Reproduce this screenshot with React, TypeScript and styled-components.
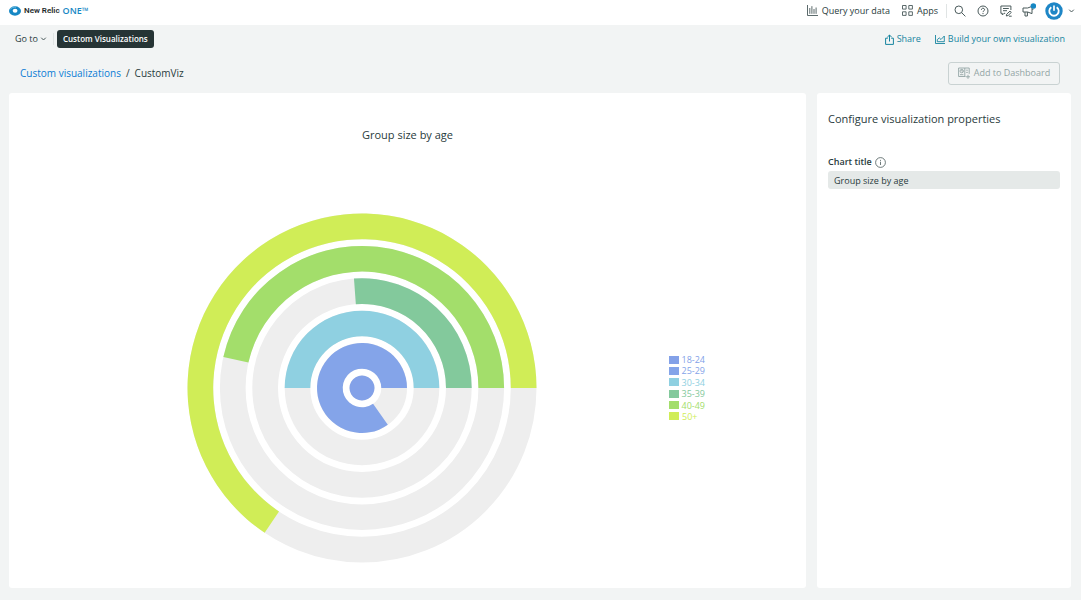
import React from 'react';
import styled, { createGlobalStyle } from 'styled-components';

const color = {
  canvas: '#f2f4f4',
  ink: '#293b3c',
  icon: '#4a5a5b',
  link: '#0b7cd4',
  teal: '#16849f',
  dark: '#263435',
  muted: '#93a5a5',
  brand: '#1687c4',
};

const GlobalStyle = createGlobalStyle`
  *, *::before, *::after { box-sizing: border-box; }
  body {
    margin: 0;
    background: ${color.canvas};
    color: ${color.ink};
    font-family: 'Open Sans', 'Noto Sans', sans-serif;
    font-size: 9px;
    line-height: 12px;
  }
  button, input { font: inherit; color: inherit; }
  button { border: 0; background: none; padding: 0; cursor: pointer; }
  a { text-decoration: none; color: inherit; }
  svg { display: block; flex: none; }
`;

const Page = styled.div`
  min-height: 100vh;
  display: flex;
  flex-direction: column;
`;

const TopBar = styled.header`
  display: flex;
  align-items: center;
  justify-content: space-between;
  height: 25px;
  padding: 0 6px 4px 9px;
  background: #fff;
`;

const Brand = styled.a`
  display: flex;
  align-items: center;
  gap: 3px;
  font-weight: 600;
  color: #1d2b2c;
`;

const BrandName = styled.span`
  font-family: Roboto, 'Open Sans', sans-serif;
  font-size: 8px;
`;

const BrandOne = styled.span`
  color: ${color.brand};
`;

const TopNav = styled.nav`
  display: flex;
  align-items: center;
`;

const NavGroup = styled.div`
  display: flex;
  align-items: center;
  gap: 12px;
  margin-right: 8px;
`;

const NavButton = styled.button`
  display: flex;
  align-items: center;
  gap: 4px;
`;

const Divider = styled.span<{ $height: number }>`
  width: 1px;
  height: ${(p) => p.$height}px;
  background: #e0e4e4;
`;

const IconGroup = styled.div`
  display: flex;
  align-items: center;
  gap: 9px;
  margin-left: 6px;
`;

const IconButton = styled.button`
  display: flex;
  align-items: center;
  justify-content: center;
  width: 14px;
  height: 18px;
`;

const AccountButton = styled.button`
  display: flex;
  align-items: center;
  gap: 5px;
`;

const SubBar = styled.div`
  display: flex;
  align-items: center;
  justify-content: space-between;
  height: 28px;
  padding: 0 16px 0 15px;
`;

const SubGroup = styled.div<{ $gap: number }>`
  display: flex;
  align-items: center;
  gap: ${(p) => p.$gap}px;
`;

const GoTo = styled.button`
  display: flex;
  align-items: center;
  gap: 2px;
  margin-right: 3px;
`;

const CurrentTab = styled.button`
  height: 18px;
  padding: 0 6px;
  border-radius: 3px;
  background: ${color.dark};
  color: #fff;
  font-weight: 600;
  font-size: 8px;
`;

const ActionLink = styled.a`
  display: flex;
  align-items: center;
  gap: 3px;
  color: ${color.teal};
`;

const Heading = styled.div`
  display: flex;
  align-items: center;
  justify-content: space-between;
  height: 40px;
  padding: 0 21px 0 20px;
`;

const Crumbs = styled.nav`
  display: flex;
  gap: 5px;
  font-size: 10px;
  line-height: 14px;
`;

const CrumbLink = styled.a`
  color: ${color.link};
`;

const AddButton = styled.button`
  display: flex;
  align-items: center;
  justify-content: center;
  gap: 4px;
  width: 112px;
  height: 23px;
  border: 1px solid #c9d2d2;
  border-radius: 3px;
  color: ${color.muted};
`;

const Main = styled.main`
  flex: 1;
  display: grid;
  grid-template-columns: minmax(0, 1fr) 254px;
  gap: 11px;
  padding: 0 10px 12px 9px;
`;

const Card = styled.section`
  background: #fff;
  border-radius: 3px;
`;

const ChartCard = styled(Card)`
  display: flex;
  flex-direction: column;
  padding: 34px 0 25px;
`;

const ChartTitle = styled.h2`
  margin: 0;
  text-align: center;
  font-weight: 400;
  font-size: 11px;
  line-height: 16px;
`;

const ChartArea = styled.div`
  flex: 1;
  display: flex;
  align-items: flex-end;
  padding: 70px 101px 0 46px;
`;

const Plot = styled.div`
  flex: 1;
  display: flex;
  justify-content: center;
`;

const Legend = styled.ul`
  display: flex;
  flex-direction: column;
  justify-content: space-between;
  align-self: center;
  height: 68px;
  width: 36px;
  margin: 0;
  padding: 0;
  list-style: none;
  line-height: 11px;
`;

const LegendItem = styled.li<{ $tone: string }>`
  display: flex;
  align-items: center;
  gap: 3px;
  white-space: nowrap;
  color: ${(p) => p.$tone};
`;

const Swatch = styled.span<{ $tone: string }>`
  width: 10px;
  height: 8px;
  background: ${(p) => p.$tone};
`;

const ConfigCard = styled(Card)`
  padding: 18px 11px;
`;

const ConfigTitle = styled.h2`
  margin: 0 0 27px;
  font-weight: 400;
  font-size: 11px;
  line-height: 16px;
`;

const FieldHead = styled.div`
  display: flex;
  align-items: center;
  gap: 3px;
  height: 16px;
`;

const FieldLabel = styled.label`
  font-weight: 600;
`;

const TextField = styled.input`
  display: block;
  width: 100%;
  height: 18px;
  margin-top: 1px;
  padding: 0 6px;
  border: 0;
  border-radius: 3px;
  background: #e5e9e8;
`;

const stroke = { fill: 'none', stroke: color.icon, strokeWidth: 1 } as const;

const LogoIcon = () => (
  <svg width="12" height="10" viewBox="0 0 12 10">
    <ellipse cx="6" cy="5" rx="6" ry="4.7" fill={color.brand} />
    <ellipse cx="6.1" cy="4.7" rx="2.4" ry="2" fill="#fff" />
    <path d="M1 3.6C2.4 1.4 5 .9 7 1.2" fill="none" stroke="#6fc0e4" strokeWidth=".9" />
  </svg>
);

const QueryIcon = () => (
  <svg width="11" height="11" viewBox="0 0 11 11" {...stroke} strokeWidth=".9">
    <path d="M.5 0v10.5H11M2.8 8.8V3M4.9 8.8V1.2M7 8.8V4M9.1 8.8V2.5" />
  </svg>
);

const AppsIcon = () => (
  <svg width="11" height="11" viewBox="0 0 11 11" {...stroke} strokeWidth=".9">
    <path d="M.5.5h3.6v3.6H.5zM6.8.5h3.6v3.6H6.8zM.5 6.8h3.6v3.6H.5zM6.8 6.8h3.6v3.6H6.8z" />
  </svg>
);

const SearchIcon = () => (
  <svg width="12" height="12" viewBox="0 0 12 12" {...stroke}>
    <circle cx="4.8" cy="4.8" r="3.8" />
    <path d="M7.6 7.6l3.8 3.8" />
  </svg>
);

const HelpIcon = () => (
  <svg width="12" height="12" viewBox="0 0 12 12" {...stroke}>
    <circle cx="6" cy="6" r="5" />
    <path d="M4.4 4.8C4.4 2.6 7.7 2.7 7.6 4.8 7.5 5.9 6 5.8 6 7.1M6 8v1.1" />
  </svg>
);

const FeedbackIcon = () => (
  <svg width="12" height="12" viewBox="0 0 12 12" {...stroke}>
    <path d="M5.2 8.3H4L2.3 10V8.3H.9V1h10v4M3 3.5h5.8M3 5.7h4" />
    <path d="M6.3 11l.4-1.8 3.3-3.1 1.3 1.3-3.2 3.1zM9 11.2h2.7" />
  </svg>
);

const MegaphoneIcon = () => (
  <svg width="14" height="18" viewBox="0 0 14 18">
    <g {...stroke}>
      <path d="M1 6h4.600L10 4.400v7.200L5.600 10H1zM3 10v4h2.400v-4M10 7.200h1.500" />
    </g>
    <circle cx="11.400" cy="4" r="2.800" fill={color.brand} />
  </svg>
);

const AvatarIcon = () => (
  <svg width="18" height="18" viewBox="0 0 18 18">
    <circle cx="9" cy="9" r="8.700" fill="#1e86c6" />
    <path d="M6.300 5.200A4.700 4.700 0 1 0 11.700 5.200" fill="none" stroke="#fff" strokeWidth="1.800" />
    <path d="M9 3.500v5.200" stroke="#fff" strokeWidth="1.700" />
  </svg>
);

const ChevronIcon = () => (
  <svg width="7" height="6" viewBox="0 0 7 6" {...stroke}>
    <path d="M1.200 1.700l2.300 2.300 2.300-2.300" />
  </svg>
);

const ShareIcon = () => (
  <svg width="9" height="11" viewBox="0 0 9 11" {...stroke} stroke={color.teal}>
    <path d="M2.800 4.200H.6v6.200h7.800V4.200H6.200M4.500 7.500V1M2.300 3.200L4.500 1l2.200 2.200" />
  </svg>
);

const BuildIcon = () => (
  <svg width="10" height="9" viewBox="0 0 10 9" {...stroke} stroke={color.teal}>
    <path d="M.5 0v8.500H10M2.300 6.700V4.600l2-1.700 1.700 1.600L9.300 1v5.700z" strokeWidth=".9" />
  </svg>
);

const DashboardIcon = () => (
  <svg width="12" height="12" viewBox="0 0 12 12" {...stroke} stroke={color.muted}>
    <path d="M7.500 9.500H.6V1h6.200v8.500M6.800 1h4.400v5.800M8.200 3.200h1.600M8.200 5.400h1.600M10 7.800v4M8 9.800h4M2 7.700h3.400" strokeWidth=".9" />
    <circle cx="3.700" cy="4.100" r="1.700" strokeWidth=".9" />
    <path d="M3.700 2.400v1.700h1.700" strokeWidth=".7" />
  </svg>
);

const InfoIcon = () => (
  <svg width="11" height="11" viewBox="0 0 11 11" {...stroke} strokeWidth=".8">
    <circle cx="5.500" cy="5.500" r="4.900" />
    <path d="M5.500 4.700v3.300M5.500 2.900v1" />
  </svg>
);

const series = [
  { label: '18-24', fill: '#83a1e8', inner: 0, outer: 12.5, sweep: 359.9 },
  { label: '25-29', fill: '#84a4e9', inner: 19.3, outer: 45, sweep: 305 },
  { label: '30-34', fill: '#8fd0e1', inner: 51.7, outer: 77.3, sweep: 180 },
  { label: '35-39', fill: '#83c99c', inner: 84, outer: 109.7, sweep: 94.2 },
  { label: '40-49', fill: '#a3de6b', inner: 116.4, outer: 142.1, sweep: 167.4 },
  { label: '50+', fill: '#d0ed57', inner: 148.8, outer: 174.5, sweep: 236.1 },
];

const CENTER = 175;

/** Point on a circle, measured counter-clockwise from three o'clock. */
const point = (radius: number, degrees: number) => {
  const a = (degrees * Math.PI) / 180;
  return `${CENTER + radius * Math.cos(a)} ${CENTER - radius * Math.sin(a)}`;
};

const sector = (inner: number, outer: number, sweep: number) => {
  const large = sweep > 180 ? 1 : 0;
  return [
    `M${point(outer, 0)}`,
    `A${outer} ${outer} 0 ${large} 0 ${point(outer, sweep)}`,
    `L${point(inner, sweep)}`,
    inner > 0 ? `A${inner} ${inner} 0 ${large} 1 ${point(inner, 0)}` : '',
    'Z',
  ].join(' ');
};

const RadialChart = () => (
  <svg width="350" height="350" viewBox="0 0 350 350" role="img" aria-label="Group size by age">
    {series.map((s) => (
      <g key={s.label}>
        <circle
          cx={CENTER}
          cy={CENTER}
          r={(s.inner + s.outer) / 2}
          fill="none"
          stroke="#eeeeee"
          strokeWidth={s.outer - s.inner}
        />
        <path d={sector(s.inner, s.outer, s.sweep)} fill={s.fill} />
      </g>
    ))}
  </svg>
);

export default function App() {
  return (
    <Page>
      <GlobalStyle />
      <TopBar>
        <Brand href="#">
          <LogoIcon />
          <BrandName>New Relic</BrandName>
          <BrandOne>ONE™</BrandOne>
        </Brand>
        <TopNav>
          <NavGroup>
            <NavButton>
              <QueryIcon />
              Query your data
            </NavButton>
            <NavButton>
              <AppsIcon />
              Apps
            </NavButton>
          </NavGroup>
          <Divider $height={14} />
          <IconGroup>
            <IconButton aria-label="Search">
              <SearchIcon />
            </IconButton>
            <IconButton aria-label="Help">
              <HelpIcon />
            </IconButton>
            <IconButton aria-label="Feedback">
              <FeedbackIcon />
            </IconButton>
            <IconButton aria-label="What's new">
              <MegaphoneIcon />
            </IconButton>
            <AccountButton aria-label="Account">
              <AvatarIcon />
              <ChevronIcon />
            </AccountButton>
          </IconGroup>
        </TopNav>
      </TopBar>

      <SubBar>
        <SubGroup $gap={3}>
          <GoTo>
            Go to
            <ChevronIcon />
          </GoTo>
          <Divider $height={12} />
          <CurrentTab>Custom Visualizations</CurrentTab>
        </SubGroup>
        <SubGroup $gap={14}>
          <ActionLink href="#">
            <ShareIcon />
            Share
          </ActionLink>
          <ActionLink href="#">
            <BuildIcon />
            Build your own visualization
          </ActionLink>
        </SubGroup>
      </SubBar>

      <Heading>
        <Crumbs aria-label="Breadcrumb">
          <CrumbLink href="#">Custom visualizations</CrumbLink>
          <span>/</span>
          <span>CustomViz</span>
        </Crumbs>
        <AddButton>
          <DashboardIcon />
          Add to Dashboard
        </AddButton>
      </Heading>

      <Main>
        <ChartCard>
          <ChartTitle>Group size by age</ChartTitle>
          <ChartArea>
            <Plot>
              <RadialChart />
            </Plot>
            <Legend>
              {series.map((s) => (
                <LegendItem key={s.label} $tone={s.fill}>
                  <Swatch $tone={s.fill} />
                  {s.label}
                </LegendItem>
              ))}
            </Legend>
          </ChartArea>
        </ChartCard>
        <ConfigCard>
          <ConfigTitle>Configure visualization properties</ConfigTitle>
          <FieldHead>
            <FieldLabel htmlFor="chart-title">Chart title</FieldLabel>
            <InfoIcon />
          </FieldHead>
          <TextField id="chart-title" type="text" defaultValue="Group size by age" />
        </ConfigCard>
      </Main>
    </Page>
  );
}
